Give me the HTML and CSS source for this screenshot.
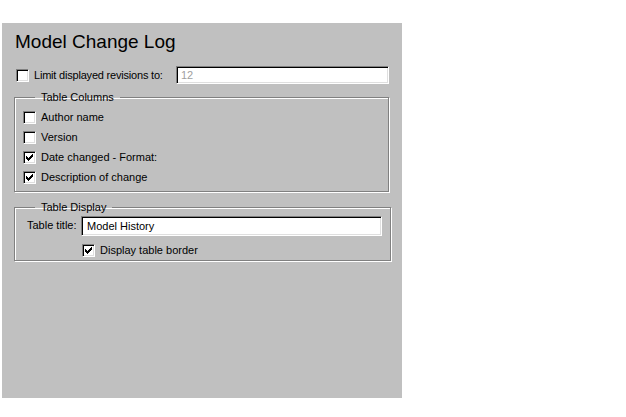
FILE: index.html
```html
<!DOCTYPE html>
<html lang="en">
<head>
  <meta charset="UTF-8" />
  <title>Model Change Log</title>
  <link rel="stylesheet" href="styles.css">
</head>
<body>
  <div class="panel">
    <h2 class="title">Model Change Log</h2>

    <div class="limit-row">
      <label class="check"><span class="box"></span>Limit displayed revisions to:</label>
      <input class="field limit-field" type="text" value="12" disabled />
    </div>

    <fieldset class="group columns">
      <legend>Table Columns</legend>
      <label class="check"><span class="box"></span>Author name</label>
      <label class="check"><span class="box"></span>Version</label>
      <label class="check"><span class="box checked"><svg viewBox="0 0 7 7" width="7" height="7" shape-rendering="crispEdges"><path d="M0 2h1v3H0zM1 3h1v3H1zM2 4h1v3H2zM3 3h1v3H3zM4 2h1v3H4zM5 1h1v3H5zM6 0h1v3H6z" fill="#000"/></svg></span>Date changed - Format:</label>
      <label class="check"><span class="box checked"><svg viewBox="0 0 7 7" width="7" height="7" shape-rendering="crispEdges"><path d="M0 2h1v3H0zM1 3h1v3H1zM2 4h1v3H2zM3 3h1v3H3zM4 2h1v3H4zM5 1h1v3H5zM6 0h1v3H6z" fill="#000"/></svg></span>Description of change</label>
    </fieldset>

    <fieldset class="group display">
      <legend>Table Display</legend>
      <div class="title-row">
        <span class="title-label">Table title:</span>
        <input class="field title-field" type="text" value="Model History" />
      </div>
      <label class="check border-opt"><span class="box checked"><svg viewBox="0 0 7 7" width="7" height="7" shape-rendering="crispEdges"><path d="M0 2h1v3H0zM1 3h1v3H1zM2 4h1v3H2zM3 3h1v3H3zM4 2h1v3H4zM5 1h1v3H5zM6 0h1v3H6z" fill="#000"/></svg></span>Display table border</label>
    </fieldset>
  </div>
</body>
</html>
```

FILE: styles.css
```css
body {
  margin: 0;
  background: #fff;
  font-family: 'Liberation Sans', Arial, sans-serif;
  font-size: 11px;
  color: #000;
}
.panel {
  width: 400px;
  height: 375px;
  margin: 23px 0 0 2px;
  padding: 9px 13px 0 12px;
  box-sizing: border-box;
  background: #c0c0c0;
}
.title {
  margin: 0 0 0 1px;
  font-size: 19px;
  font-weight: normal;
  line-height: 20px;
}
.limit-row {
  display: flex;
  align-items: center;
  justify-content: space-between;
  margin-top: 14px;
  height: 18px;
}
.limit-row .check {
  margin-left: 2px;
  letter-spacing: -0.2px;
}
.check {
  display: flex;
  align-items: center;
  height: 20px;
  white-space: nowrap;
}
.box {
  width: 13px;
  height: 13px;
  box-sizing: border-box;
  margin-right: 5px;
  background: #fff;
  border: 1px solid;
  border-color: #808080 #fff #fff #808080;
  box-shadow: inset 1px 1px 0 #000, inset -1px -1px 0 #dfdfdf;
  display: flex;
  align-items: center;
  justify-content: center;
}
.box svg {
  display: block;
}
.field {
  box-sizing: border-box;
  margin: 0;
  padding: 0 3px;
  font-family: inherit;
  font-size: 11px;
  color: #000;
  background: #fff;
  border: 1px solid;
  border-color: #808080 #fff #fff #808080;
  box-shadow: inset 1px 1px 0 #000, inset -1px -1px 0 #dfdfdf;
  outline: none;
}
.limit-field {
  width: 213px;
  height: 18px;
  padding-left: 4px;
  color: #a0a0a0;
}
.group {
  margin: 0;
  padding: 0 8px 3px;
  border: 1px solid #808080;
  box-shadow: 1px 1px 0 #fff, inset 1px 1px 0 #fff;
}
.group legend {
  margin-left: 12px;
  padding: 0 6px;
  line-height: 13px;
}
.columns {
  margin-top: 7px;
  padding-top: 3px;
  padding-bottom: 4px;
}
.display {
  margin-top: 9px;
  padding-top: 2px;
  padding-bottom: 0;
}
.title-row {
  display: flex;
  align-items: flex-start;
  padding-left: 4px;
}
.title-label {
  width: 54px;
  padding-top: 3px;
}
.title-field {
  width: 301px;
  height: 20px;
  padding-left: 5px;
}
.border-opt {
  margin-left: 59px;
  margin-top: 4px;
}
```
